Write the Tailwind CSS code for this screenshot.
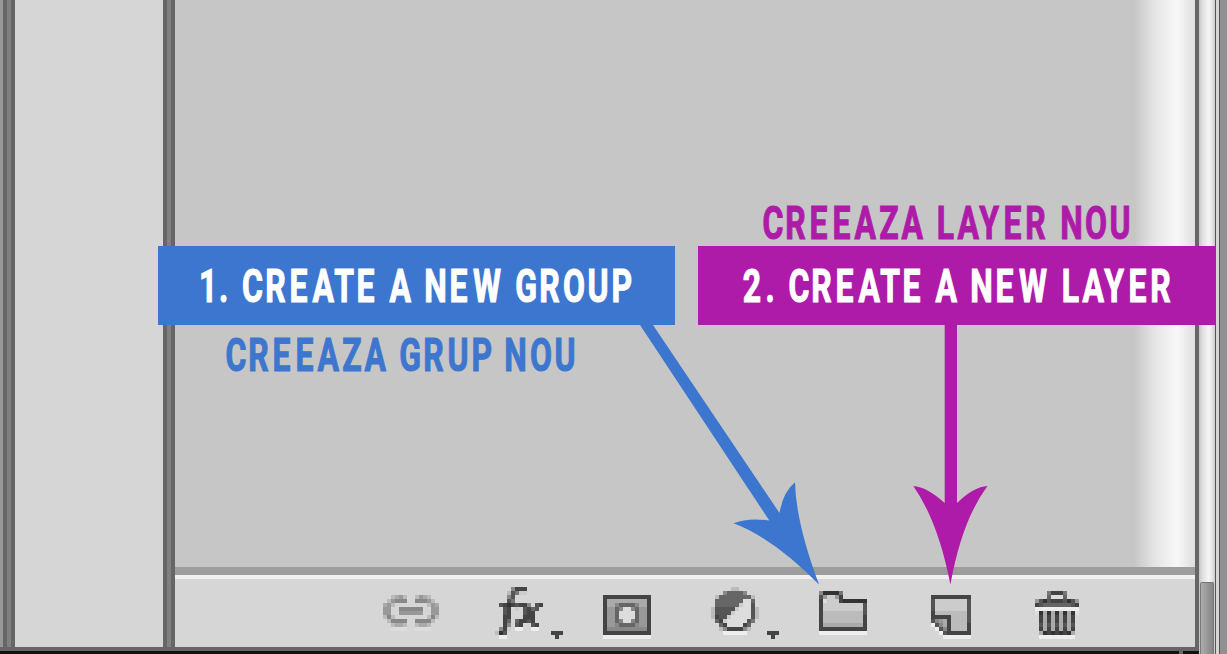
<!DOCTYPE html>
<html lang="en">
<head>
<meta charset="utf-8">
<title>Layers panel guide</title>
<script src="https://cdn.jsdelivr.net/npm/@tailwindcss/browser@4"></script>
</head>
<body class="relative h-[654px] w-[1227px] overflow-hidden bg-[#111111]">
<div class="flex h-full">
  <div class="flex h-full w-[1199px] flex-col">
    <div class="flex h-[647px]">
      <div class="w-[3px] bg-[#979797]"></div>
      <div class="w-3 border-x-4 border-[#666666] bg-[#808080]"></div>
      <div class="w-[148px] bg-[#d6d6d6]"></div>
      <div class="w-3 border-x-4 border-[#666666] bg-[#808080]"></div>
      <main class="flex w-[1020px] flex-col bg-[#d6d6d6]">
        <div class="flex h-[567px] justify-end bg-[#c6c6c6]">
          <div class="w-[60px] bg-[linear-gradient(90deg,#c7c7c7_0%,#cfcfcf_8%,#e1e1e1_28%,#ebebeb_45%,#f1f1f1_57%,#f7f7f7_70%,#eeeeee_82%,#dedede_100%)]"></div>
        </div>
        <div class="h-2 bg-[#9d9d9d]"></div>
        <div class="h-1 bg-[#f0f0f0]"></div>
        <div class="flex h-[68px] items-start pl-[208px]">
          <svg class="mt-4 h-9 w-14" viewBox="0 0 14 9" shape-rendering="crispEdges" data-rows="..ba9b..b9ab..|.b9888..8889b.|a9b........b9a|99..888888..99|99..999999..99|b8b........b8b|.b8888..8888b.|..baab..baab..|..dddd..dddd.."></svg>
          <svg class="ml-14 mt-2 h-[52px] w-[68px]" viewBox="0 0 17 13" shape-rendering="crispEdges" data-rows="....8444|...b57cc|...85|...57|.54345448.54|..54.c.5465|..54...544|..44...444|..46.64454|..48.54..54|.84c.ee..ee|b35...........444|.ee............4."></svg>
          <svg class="ml-10 mt-4 h-11 w-12" viewBox="0 0 12 11" shape-rendering="crispEdges" data-rows="444444444444|4aaaaaaaaaa4|4aa866668aa4|49968dd86994|4996dddd6994|4996dddd6994|49968dd86994|499866668994|488888888884|444444444444|eeeeeeeeeeee"></svg>
          <svg class="ml-[60px] mt-2 h-[52px] w-[68px]" viewBox="0 0 17 13" shape-rendering="crispEdges" data-rows=".....bb|...866668|.b66666666b|.6666666dd6|.666666cdd5|b55555cddd5b|b5555cdddd5b|b455cddddd5b|.64cddddd57|..64dddd46|..b844448b|...eeeeee.....444|...............4."></svg>
          <svg class="ml-10 mt-3 h-11 w-12" viewBox="0 0 12 11" shape-rendering="crispEdges" data-rows="833337......|59cc94......|4dccc4333333|4cccccccccc5|4cccccccccc5|4bbbbbbbbbb5|4bbbbbbbbbb4|4bbbbbbbbbb4|4aaaaaaaaaa4|444444444444|eeeeeeeeeeee"></svg>
          <svg class="ml-16 mt-4 h-11 w-10" viewBox="0 0 10 11" shape-rendering="crispEdges" data-rows="4444444444|5cccccccc5|5cccccccc5|5cccccccc5|4bbbbbbbb5|44444bbbb5|589a4bbbb5|e58a4bbbb4|.e584bbbb4|..e5444444|...eeeeeee"></svg>
          <svg class="ml-16 mt-3 h-12 w-11" viewBox="0 0 11 12" shape-rendering="crispEdges" data-rows="...74447...|...6ddd6...|95354445359|45666666654|eeeeeeeeeee|d3a3a3a3a3d|.4a4a4a4a4.|.4a4a4a4a4.|.5a5a5a5a5.|.4a4a4a4a4.|.a3434343a.|.eeeeeeeee."></svg>
        </div>
      </main>
      <div class="w-1 bg-[#666666]"></div>
    </div>
    <div class="h-1 bg-[#666666]"></div>
    <div class="flex h-[3px] justify-end pr-4"><div class="w-1 bg-[#666666]"></div></div>
  </div>
  <div class="flex w-4 flex-col items-center justify-end bg-[linear-gradient(90deg,#c4c4c4,#dedede_20%,#f5f5f5_60%,#ededed_75%,#cccccc)]">
    <div class="h-[72px] w-[14px] rounded-t-[2px] border-x border-t border-[#777777] bg-linear-to-r from-[#adadad] to-[#858585]"></div>
  </div>
  <div class="w-px bg-[#555555]"></div>
  <div class="w-[3px] bg-[#d6d6d6]"></div>
  <div class="w-px bg-[#555555]"></div>
  <div class="w-[7px] bg-[#919191]"></div>
</div>

<svg class="absolute inset-0 h-[654px] w-[1227px]" viewBox="0 0 1227 654">
  <g fill="#3d76cf">
    <path d="M158 246H675V325H158Z"/>
    <path d="M640 325L653 325L779.5 513Q783 492 795 482.300Q796 523 819 584.500Q773 538 733.500 523.300Q748 517.500 769.300 520.500Z"/>
  </g>
  <g fill="#ae1ba9">
    <path d="M698 246H1216V325H698Z"/>
    <path d="M944.700 324H957V503Q974 486.500 987.500 486Q962 520 950.400 584.500Q938 521 913.300 486Q927 487 944.700 503Z"/>
  </g>
  <g font-family="Roboto, Liberation Sans, sans-serif" font-weight="700" font-size="47" stroke-width="1.1" id="labels">
    <text transform="translate(0 301.7) scale(.68 1)" fill="#fff" stroke="#fff" data-left="201 220.5 230 243.5 267 291 313 335 358 380 390 415 426 451 473 505 517 541 565 589 613">1. CREATE A NEW GROUP</text>
    <text transform="translate(0 370.7) scale(.68 1)" fill="#3d76cf" stroke="#3d76cf" data-left="227 250 274 297 318 343 365 390 401 425 449 473 495 506 532 556">CREEAZA GRUP NOU</text>
    <text transform="translate(0 238.7) scale(.68 1)" fill="#ae1ba9" stroke="#ae1ba9" data-left="764 787 811 834 855 880 902 927 938 958 979 1005 1027 1050 1062 1087 1111">CREEAZA LAYER NOU</text>
    <text transform="translate(0 301.7) scale(.68 1)" fill="#fff" stroke="#fff" data-left="743 767 777 790 813 837 859 881 904 925 936 962 972 997 1019 1052 1063 1083 1104 1130 1152">2. CREATE A NEW LAYER</text>
  </g>
</svg>
<script>
// Toolbar icons: one hex digit per cell is its grey level, a dot is empty.
document.querySelectorAll('svg[data-rows]').forEach(svg => {
  svg.dataset.rows.split('|').forEach((row, y) => [...row].forEach((c, x) => {
    if (c === '.') return;
    const r = document.createElementNS('http://www.w3.org/2000/svg', 'rect');
    r.setAttribute('x', x); r.setAttribute('y', y);
    r.setAttribute('width', 1); r.setAttribute('height', 1);
    r.setAttribute('fill', '#' + c + c + c);
    svg.append(r);
  }));
});
// Labels: centre each condensed letter in its slot.
const slot = {'1':11,'2':18,'.':6,C:18,R:18.5,E:16,A:21,T:18,N:19,W:28,G:18.5,O:18,U:18,P:18,Z:18,L:16,Y:21,' ':0};
const ctx = document.createElement('canvas').getContext('2d');
ctx.font = '700 47px Roboto, "Liberation Sans", sans-serif';
document.querySelectorAll('#labels text').forEach(t => {
  const left = t.dataset.left.split(' ').map(Number);
  t.setAttribute('x', [...t.textContent].map((c, i) => {
    const m = ctx.measureText(c);
    const mid = c === ' ' ? 0 : (m.actualBoundingBoxRight - m.actualBoundingBoxLeft) / 2;
    return ((left[i] + slot[c] / 2) / 0.68 - mid).toFixed(2);
  }).join(' '));
});
</script>
</body>
</html>
